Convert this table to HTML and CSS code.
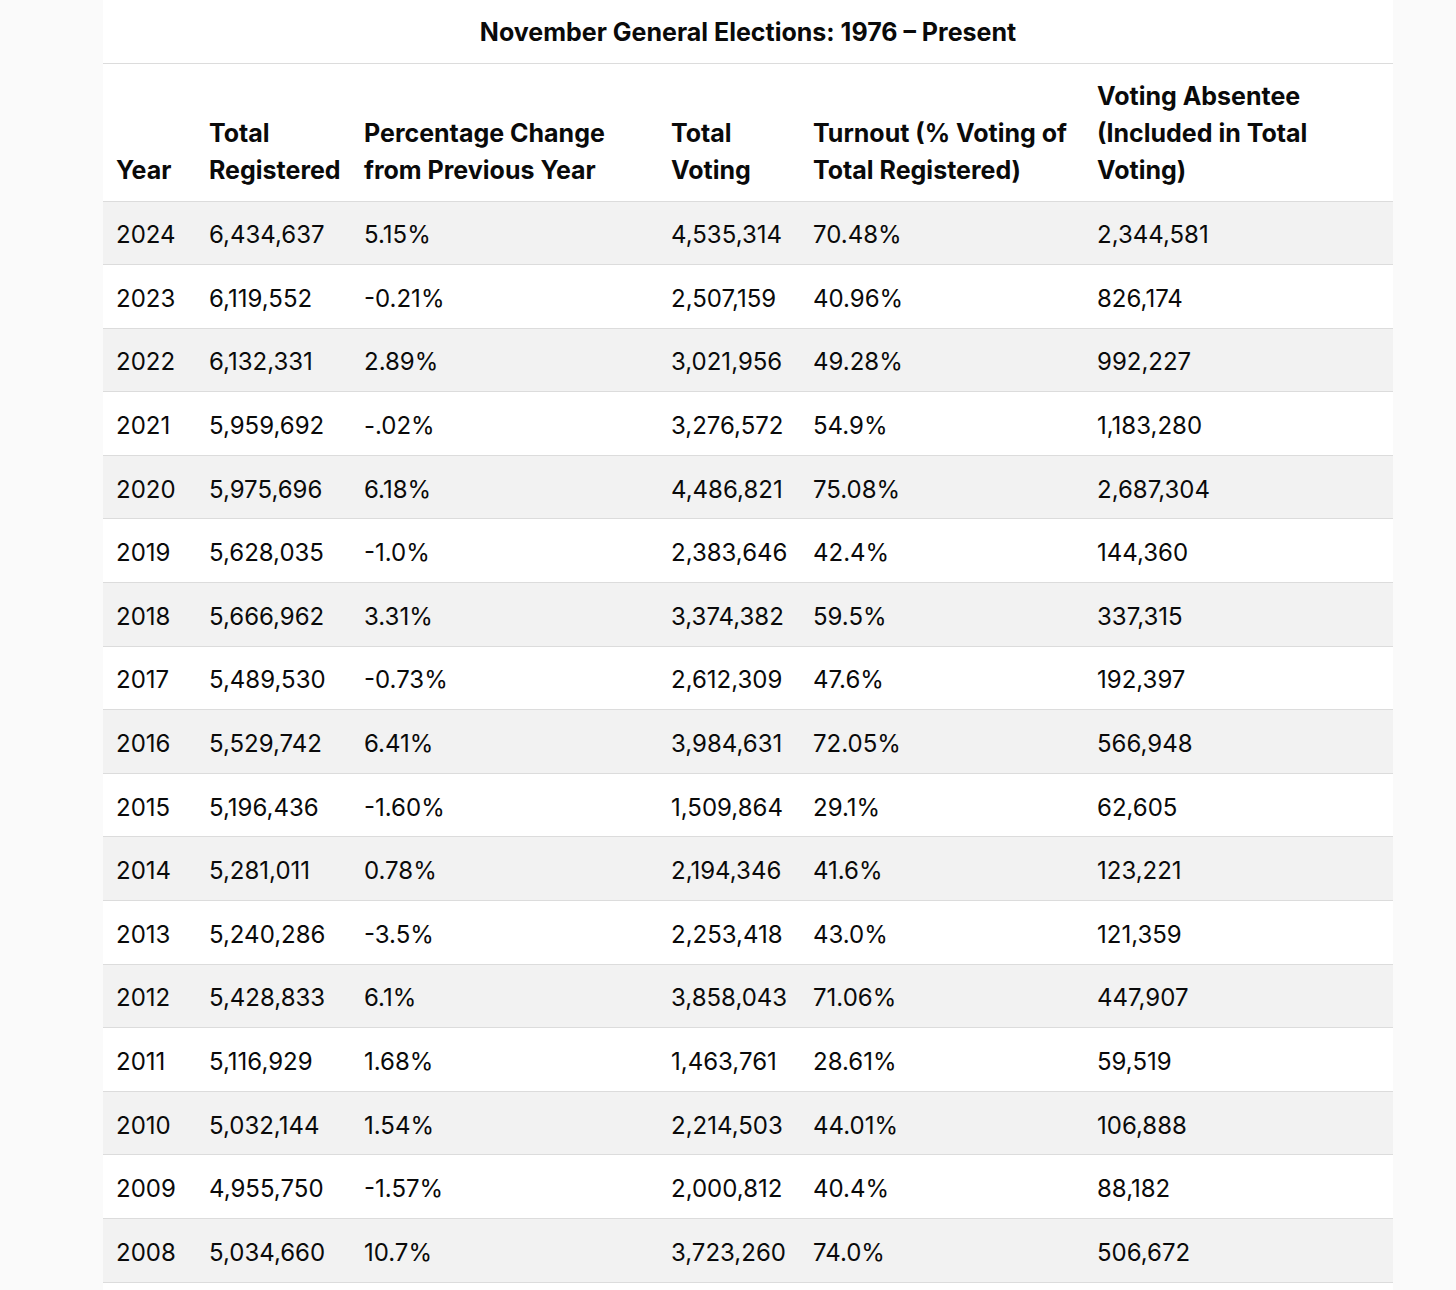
FILE: index.html
```html
<!DOCTYPE html>
<html lang="en">
<head>
<meta charset="utf-8">
<title>November General Elections: 1976 – Present</title>
<link rel="stylesheet" href="styles.css">
</head>
<body>
<div class="card">
  <div class="title">November General Elections: 1976 – Present</div>
  <table class="data">
    <colgroup>
      <col class="c1"><col class="c2"><col class="c3"><col class="c4"><col class="c5"><col class="c6">
    </colgroup>
    <thead>
      <tr>
        <th>Year</th>
        <th>Total Registered</th>
        <th>Percentage Change from Previous Year</th>
        <th>Total Voting</th>
        <th>Turnout (% Voting of Total Registered)</th>
        <th class="last">Voting Absentee (Included in Total Voting)</th>
      </tr>
    </thead>
    <tbody>
      <tr><td>2024</td><td>6,434,637</td><td>5.15%</td><td>4,535,314</td><td>70.48%</td><td>2,344,581</td></tr>
      <tr><td>2023</td><td>6,119,552</td><td>-0.21%</td><td>2,507,159</td><td>40.96%</td><td>826,174</td></tr>
      <tr><td>2022</td><td>6,132,331</td><td>2.89%</td><td>3,021,956</td><td>49.28%</td><td>992,227</td></tr>
      <tr><td>2021</td><td>5,959,692</td><td>-.02%</td><td>3,276,572</td><td>54.9%</td><td>1,183,280</td></tr>
      <tr><td>2020</td><td>5,975,696</td><td>6.18%</td><td>4,486,821</td><td>75.08%</td><td>2,687,304</td></tr>
      <tr><td>2019</td><td>5,628,035</td><td>-1.0%</td><td>2,383,646</td><td>42.4%</td><td>144,360</td></tr>
      <tr><td>2018</td><td>5,666,962</td><td>3.31%</td><td>3,374,382</td><td>59.5%</td><td>337,315</td></tr>
      <tr><td>2017</td><td>5,489,530</td><td>-0.73%</td><td>2,612,309</td><td>47.6%</td><td>192,397</td></tr>
      <tr><td>2016</td><td>5,529,742</td><td>6.41%</td><td>3,984,631</td><td>72.05%</td><td>566,948</td></tr>
      <tr><td>2015</td><td>5,196,436</td><td>-1.60%</td><td>1,509,864</td><td>29.1%</td><td>62,605</td></tr>
      <tr><td>2014</td><td>5,281,011</td><td>0.78%</td><td>2,194,346</td><td>41.6%</td><td>123,221</td></tr>
      <tr><td>2013</td><td>5,240,286</td><td>-3.5%</td><td>2,253,418</td><td>43.0%</td><td>121,359</td></tr>
      <tr><td>2012</td><td>5,428,833</td><td>6.1%</td><td>3,858,043</td><td>71.06%</td><td>447,907</td></tr>
      <tr><td>2011</td><td>5,116,929</td><td>1.68%</td><td>1,463,761</td><td>28.61%</td><td>59,519</td></tr>
      <tr><td>2010</td><td>5,032,144</td><td>1.54%</td><td>2,214,503</td><td>44.01%</td><td>106,888</td></tr>
      <tr><td>2009</td><td>4,955,750</td><td>-1.57%</td><td>2,000,812</td><td>40.4%</td><td>88,182</td></tr>
      <tr><td>2008</td><td>5,034,660</td><td>10.7%</td><td>3,723,260</td><td>74.0%</td><td>506,672</td></tr>
    </tbody>
  </table>
</div>
</body>
</html>
```
FILE: styles.css
```css
html, body {
  margin: 0;
  padding: 0;
  background: #fafafa;
}
body {
  font-family: Inter, "Liberation Sans", sans-serif;
  color: #0a0a0a;
}
.card {
  margin-left: 103px;
  width: 1290px;
  background: #ffffff;
  height: 1290px;
}
.title {
  height: 64px;
  box-sizing: border-box;
  border-bottom: 1px solid #dcdcdc;
  display: flex;
  align-items: center;
  justify-content: center;
  font-size: 25px;
  font-weight: 700;
  padding-top: 1px;
}
.data {
  width: 1290px;
  border-collapse: collapse;
  table-layout: fixed;
  font-size: 24px;
}
.c1 { width: 93px; }
.c2 { width: 155px; }
.c3 { width: 307px; }
.c4 { width: 142px; }
.c5 { width: 284px; }
.c6 { width: 309px; }
.data th {
  text-align: left;
  vertical-align: bottom;
  font-size: 25px;
  font-weight: 700;
  line-height: 37px;
  height: 137px;
  box-sizing: border-box;
  padding: 0 12px 12px 13px;
  border-bottom: 1px solid #dcdcdc;
}
.data th.last {
  padding-right: 66px;
}
.data td {
  height: 63.6px;
  box-sizing: border-box;
  padding: 4px 6px 0 13px;
  border-bottom: 1px solid #dcdcdc;
  vertical-align: middle;
  font-weight: 400;
  white-space: nowrap;
}
.data tbody tr:nth-child(odd) {
  background: #f2f2f2;
}
```
